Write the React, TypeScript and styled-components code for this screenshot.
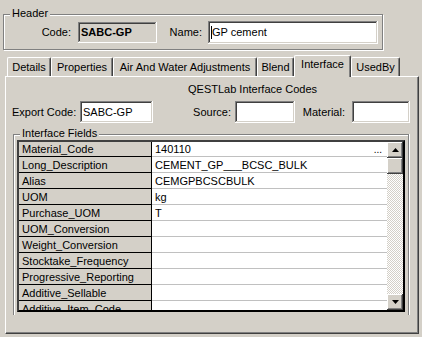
import React from "react";
import styled, { createGlobalStyle } from "styled-components";

const GlobalStyle = createGlobalStyle`
  html, body {
    margin: 0;
    padding: 0;
    background: #d4d0c8;
  }
  body {
    font-family: "Liberation Sans", Arial, sans-serif;
    font-size: 11px;
    color: #000;
  }
  * {
    box-sizing: border-box;
  }
`;

const fields = [
  { name: "Material_Code", value: "140110", more: true },
  { name: "Long_Description", value: "CEMENT_GP___BCSC_BULK" },
  { name: "Alias", value: "CEMGPBCSCBULK" },
  { name: "UOM", value: "kg" },
  { name: "Purchase_UOM", value: "T" },
  { name: "UOM_Conversion", value: "" },
  { name: "Weight_Conversion", value: "" },
  { name: "Stocktake_Frequency", value: "" },
  { name: "Progressive_Reporting", value: "" },
  { name: "Additive_Sellable", value: "" },
  { name: "Additive_Item_Code", value: "" },
];

const tabs = [
  { label: "Details", width: 44 },
  { label: "Properties", width: 62 },
  { label: "Air And Water Adjustments", width: 144 },
  { label: "Blend", width: 37 },
  { label: "Interface", width: 57, active: true },
  { label: "UsedBy", width: 49 },
];

const App: React.FC = () => {
  return (
    <>
      <GlobalStyle />
      <Window>
        <HeaderGroup>
          <Legend>Header</Legend>
          <FieldLabel $w={74} $pr={7}>Code:</FieldLabel>
          <TextBox $w={79} $h={21} $readOnly>SABC-GP</TextBox>
          <FieldLabel $w={51} $pr={6}>Name:</FieldLabel>
          <TextBox $w={170} $h={23}>
            <Caret />GP cement
          </TextBox>
        </HeaderGroup>

        <TabStrip>
          {tabs.map((t) => (
            <Tab key={t.label} $w={t.width} $active={!!t.active}>
              {t.label}
            </Tab>
          ))}
        </TabStrip>

        <Panel>
          <Caption>QESTLab Interface Codes</Caption>
          <CodeRow>
            <FieldLabel $w={68} $pr={6}>Export Code:</FieldLabel>
            <TextBox $w={73} $h={22}>SABC-GP</TextBox>
            <FieldLabel $w={82} $pr={4}>Source:</FieldLabel>
            <TextBox $w={60} $h={22} />
            <FieldLabel $w={57} $pr={7}>Material:</FieldLabel>
            <TextBox $w={58} $h={22} />
          </CodeRow>

          <FieldsGroup>
            <Legend>Interface Fields</Legend>
            <Grid>
              <Rows>
                {fields.map((f) => (
                  <Row key={f.name}>
                    <FixedCell>{f.name}</FixedCell>
                    <ValueCell>
                      <span>{f.value}</span>
                      {f.more && <Dots>...</Dots>}
                    </ValueCell>
                  </Row>
                ))}
              </Rows>
              <ScrollBar>
                <ScrollButton>
                  <svg width="7" height="4" viewBox="0 0 7 4">
                    <path d="M3.5 0 L7 4 L0 4 Z" fill="#000" />
                  </svg>
                </ScrollButton>
                <Thumb />
                <Track />
                <ScrollButton>
                  <svg width="7" height="4" viewBox="0 0 7 4">
                    <path d="M0 0 L7 0 L3.5 4 Z" fill="#000" />
                  </svg>
                </ScrollButton>
              </ScrollBar>
            </Grid>
          </FieldsGroup>
        </Panel>
      </Window>
    </>
  );
};

export default App;

const Window = styled.div`
  width: 422px;
  height: 337px;
  overflow: hidden;
  padding: 14px 0 0 3px;
  background: #d4d0c8;
`;

const HeaderGroup = styled.div`
  position: relative;
  width: 380px;
  height: 36px;
  border: 1px solid #808080;
  box-shadow: inset 1px 1px 0 #fff, 1px 1px 0 #fff;
  display: flex;
  align-items: center;
`;

const Legend = styled.span`
  position: absolute;
  top: -8px;
  left: 6px;
  padding: 0 2px;
  line-height: 13px;
  background: #d4d0c8;
`;

const FieldLabel = styled.span<{ $w: number; $pr: number }>`
  flex: none;
  width: ${(p) => p.$w}px;
  padding-right: ${(p) => p.$pr}px;
  text-align: right;
  white-space: nowrap;
  line-height: 13px;
`;

const TextBox = styled.div<{ $w: number; $h: number; $readOnly?: boolean }>`
  flex: none;
  width: ${(p) => p.$w}px;
  height: ${(p) => p.$h}px;
  padding-left: 3px;
  display: flex;
  align-items: center;
  white-space: nowrap;
  overflow: hidden;
  background: ${(p) => (p.$readOnly ? "#d4d0c8" : "#fff")};
  font-weight: ${(p) => (p.$readOnly ? "bold" : "normal")};
  box-shadow: inset -1px -1px #fff, inset 1px 1px #808080,
    inset -2px -2px #d4d0c8, inset 2px 2px #404040;
`;

const Caret = styled.span`
  display: inline-block;
  width: 1px;
  height: 13px;
  background: #000;
`;

const TabStrip = styled.div`
  margin-top: 5px;
  height: 21px;
  padding-left: 4px;
  display: flex;
  align-items: flex-end;
`;

const Tab = styled.div<{ $w: number; $active: boolean }>`
  position: relative;
  z-index: ${(p) => (p.$active ? 2 : 0)};
  flex: none;
  width: ${(p) => p.$w}px;
  height: ${(p) => (p.$active ? 22 : 19)}px;
  margin-bottom: ${(p) => (p.$active ? -1 : 0)}px;
  padding-top: ${(p) => (p.$active ? 2 : 3)}px;
  line-height: 13px;
  text-align: center;
  white-space: nowrap;
  background: #d4d0c8;
  border-top: 1px solid #fff;
  border-left: 1px solid #fff;
  border-right: 1px solid #404040;
  border-radius: 2px 2px 0 0;
  box-shadow: inset -1px 0 0 #808080;
`;

const Panel = styled.div`
  margin-left: 2px;
  width: 414px;
  height: 258px;
  padding-left: 6px;
  border-top: 1px solid #fff;
  border-left: 1px solid #fff;
  border-right: 1px solid #404040;
  border-bottom: 1px solid #404040;
  box-shadow: inset -1px -1px 0 #808080;
  overflow: hidden;
`;

const Caption = styled.div`
  margin: 6px 0 0 176px;
  line-height: 13px;
  white-space: nowrap;
`;

const CodeRow = styled.div`
  margin-top: 5px;
  height: 22px;
  display: flex;
  align-items: center;
`;

const FieldsGroup = styled.div`
  position: relative;
  margin: 11px 0 0 1px;
  width: 396px;
  height: 181px;
  padding: 5px 0 0 3px;
  border: 1px solid #808080;
  border-bottom: none;
  box-shadow: inset 1px 1px 0 #fff, 1px 0 0 #fff;
`;

const Grid = styled.div`
  width: 388px;
  height: 172px;
  border: 2px solid #000;
  border-color: #404040 #000 #000 #404040;
  display: flex;
  overflow: hidden;
  background: #fff;
`;

const Rows = styled.div`
  flex: 1;
  overflow: hidden;
`;

const Row = styled.div`
  display: flex;
  height: 16px;

  &:first-child {
    height: 15px;
  }
`;

const FixedCell = styled.div`
  flex: none;
  width: 133px;
  padding-left: 3px;
  background: #d4d0c8;
  border-right: 1px solid #000;
  border-bottom: 1px solid #000;
  display: flex;
  align-items: center;
  white-space: nowrap;
  overflow: hidden;
`;

const ValueCell = styled.div`
  flex: 1;
  padding: 0 5px 0 3px;
  background: #fff;
  border-bottom: 1px solid #c0c0c0;
  display: flex;
  align-items: center;
  justify-content: space-between;
  white-space: nowrap;
  overflow: hidden;
`;

const Dots = styled.span`
  font-size: 10px;
`;

const ScrollBar = styled.div`
  flex: none;
  width: 16px;
  display: flex;
  flex-direction: column;
`;

const ScrollButton = styled.div`
  flex: none;
  width: 16px;
  height: 16px;
  background: #d4d0c8;
  display: flex;
  align-items: center;
  justify-content: center;
  box-shadow: inset -1px -1px #404040, inset 1px 1px #fff,
    inset -2px -2px #808080, inset 2px 2px #d4d0c8;
`;

const Thumb = styled(ScrollButton)``;

const Track = styled.div`
  flex: 1;
  background-color: #fff;
  background-image: repeating-conic-gradient(#d4d0c8 0% 25%, #fff 0% 50%);
  background-size: 2px 2px;
`;
